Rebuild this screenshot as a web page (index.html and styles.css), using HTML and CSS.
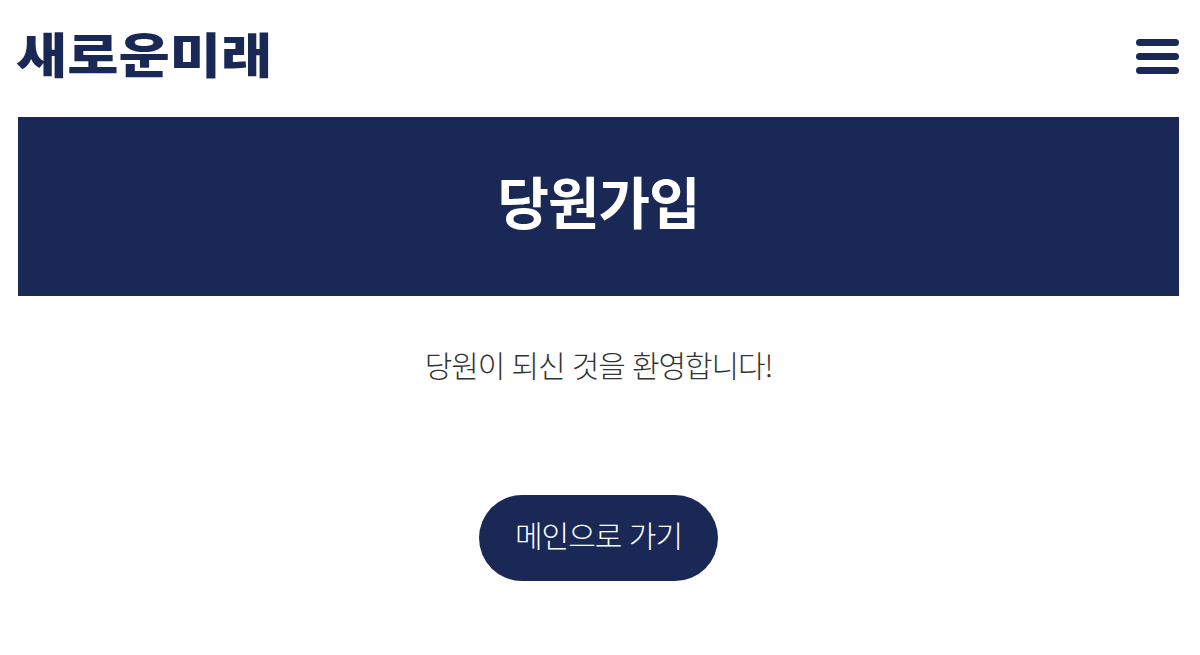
FILE: index.html
```html
<!DOCTYPE html>
<html lang="ko">
<head>
<meta charset="utf-8">
<title>당원가입</title>
<link rel="stylesheet" href="styles.css">
</head>
<body>
<header class="site-header">
  <a class="logo" href="#">새로운미래</a>
  <button class="menu-btn" aria-label="메뉴">
    <span class="bar"></span><span class="bar"></span><span class="bar"></span>
  </button>
</header>
<section class="banner"><h1>당원가입</h1></section>
<main class="content">
  <p class="welcome">당원이 되신 것을 환영합니다!</p>
  <a class="main-link" href="#">메인으로 가기</a>
</main>
</body>
</html>
```

FILE: styles.css
```css
* { box-sizing: border-box; }
html, body { margin: 0; padding: 0; }
body {
  width: 1200px;
  height: 655px;
  overflow: hidden;
  background: #fff;
  padding: 0 21px 0 18px;
  font-family: "Noto Sans CJK KR", "Noto Sans", sans-serif;
  color: #333;
}
.site-header {
  height: 117px;
  display: flex;
  align-items: center;
  justify-content: space-between;
  padding-bottom: 13px;
}
.logo {
  display: block;
  font-size: 48px;
  font-weight: 900;
  color: #1a2856;
  text-decoration: none;
  line-height: 1;
  margin-left: -2px;
  transform: scaleX(1.16);
  transform-origin: left center;
}
.menu-btn {
  width: 43px;
  padding: 0;
  border: 0;
  background: none;
  display: flex;
  flex-direction: column;
  gap: 7px;
  margin-top: 9px;
}
.bar {
  display: block;
  height: 7px;
  border-radius: 3.5px;
  background: #1a2856;
}
.banner {
  height: 179px;
  background: #1a2856;
  display: flex;
  align-items: center;
  justify-content: center;
  padding-bottom: 14px;
}
.banner h1 {
  margin: 0;
  font-size: 56px;
  font-weight: 700;
  color: #fff;
  letter-spacing: -1px;
  line-height: 1.2;
}
.content {
  display: flex;
  flex-direction: column;
  align-items: center;
}
.welcome {
  margin: 46px 0 0;
  font-size: 30px;
  font-weight: 300;
  line-height: 44px;
  letter-spacing: -1.1px;
}
.main-link {
  margin-top: 109px;
  width: 239px;
  height: 86px;
  border-radius: 43px;
  background: #1a2856;
  color: #fff;
  font-size: 30px;
  font-weight: 300;
  letter-spacing: -1px;
  text-decoration: none;
  display: flex;
  align-items: center;
  justify-content: center;
  padding-bottom: 8px;
}
```
